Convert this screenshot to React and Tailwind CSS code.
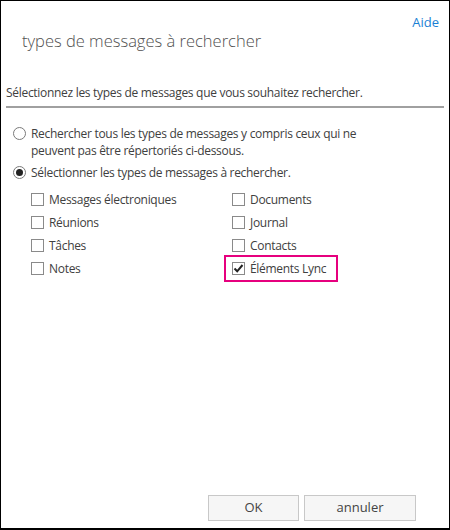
import React, { useState } from 'react';

const font = { fontFamily: '"Open Sans", "Liberation Sans", sans-serif' };

function Radio({ checked, onChange, children }) {
  return (
    <label className="flex items-start gap-[5px] cursor-pointer" onClick={onChange}>
      <span className="mt-[2px] w-[13px] h-[13px] shrink-0 rounded-full border border-[#7a7a7a] bg-white flex items-center justify-center">
        {checked && <span className="w-[7px] h-[7px] rounded-full bg-[#222]" />}
      </span>
      <span className="leading-[17px]">{children}</span>
    </label>
  );
}

function Check({ checked, onChange, label }) {
  return (
    <label className="flex items-center gap-[5px] h-[23px] cursor-pointer" onClick={onChange}>
      <span className="w-[13px] h-[13px] shrink-0 border border-[#8a8a8a] bg-white flex items-center justify-center">
        {checked && (
          <svg width="11" height="11" viewBox="0 0 11 11">
            <path d="M1.5 5.5 L4.2 8.3 L9.5 2" fill="none" stroke="#222" strokeWidth="2" />
          </svg>
        )}
      </span>
      <span>{label}</span>
    </label>
  );
}

export default function App() {
  const [mode, setMode] = useState('select');
  const [checked, setChecked] = useState({ lync: true });

  const toggle = (k) => setChecked(c => ({ ...c, [k]: !c[k] }));

  const left = [
    ['mail', 'Messages électroniques'],
    ['meet', 'Réunions'],
    ['task', 'Tâches'],
    ['note', 'Notes'],
  ];
  const right = [
    ['docs', 'Documents'],
    ['journal', 'Journal'],
    ['contacts', 'Contacts'],
  ];

  return (
    <div style={font} className="w-[450px] h-[530px] bg-white border border-black border-b-2 flex flex-col text-[#404040]">
      <div className="flex justify-end pr-[10px] pt-[13px]">
        <a className="text-[13px] leading-[16px] text-[#1a7fd4]">Aide</a>
      </div>
      <h1 className="pl-[21px] text-[16.5px] leading-[22px] font-light text-[#505050]">types de messages à rechercher</h1>

      <div className="mx-[5px] mt-[33px] pb-[5px] border-b-2 border-[#a0a0a0] text-[12px] tracking-[-0.3px] leading-[16px]">
        Sélectionnez les types de messages que vous souhaitez rechercher.
      </div>

      <div className="pl-[12px] pt-[17px] text-[12px] tracking-[-0.3px] flex flex-col gap-[5px]">
        <Radio checked={mode === 'all'} onChange={() => setMode('all')}>
          Rechercher tous les types de messages y compris ceux qui ne<br />
          peuvent pas être répertoriés ci-dessous.
        </Radio>
        <Radio checked={mode === 'select'} onChange={() => setMode('select')}>
          Sélectionner les types de messages à rechercher.
        </Radio>
      </div>

      <div className="grid grid-cols-[201px_1fr] pl-[30px] pt-[7px] text-[12px] tracking-[-0.3px]">
        <div className="flex flex-col">
          {left.map(([k, l]) => (
            <Check key={k} label={l} checked={!!checked[k]} onChange={() => toggle(k)} />
          ))}
        </div>
        <div className="flex flex-col">
          {right.map(([k, l]) => (
            <Check key={k} label={l} checked={!!checked[k]} onChange={() => toggle(k)} />
          ))}
          <div className="-ml-[8px] -my-[2px] w-[114px] h-[27px] border-2 border-[#e6007e] pl-[6px] flex items-center">
            <Check label="Éléments Lync" checked={!!checked.lync} onChange={() => toggle('lync')} />
          </div>
        </div>
      </div>

      <div className="mt-auto flex justify-end gap-[5px] pr-[33px] pb-[7px]">
        <button className="w-[91px] h-[26px] border border-[#c8c8c8] bg-[#f6f6f6] text-[13px] text-[#444]">OK</button>
        <button className="w-[112px] h-[26px] border border-[#c8c8c8] bg-[#f6f6f6] text-[13px] text-[#444]">annuler</button>
      </div>
    </div>
  );
}
